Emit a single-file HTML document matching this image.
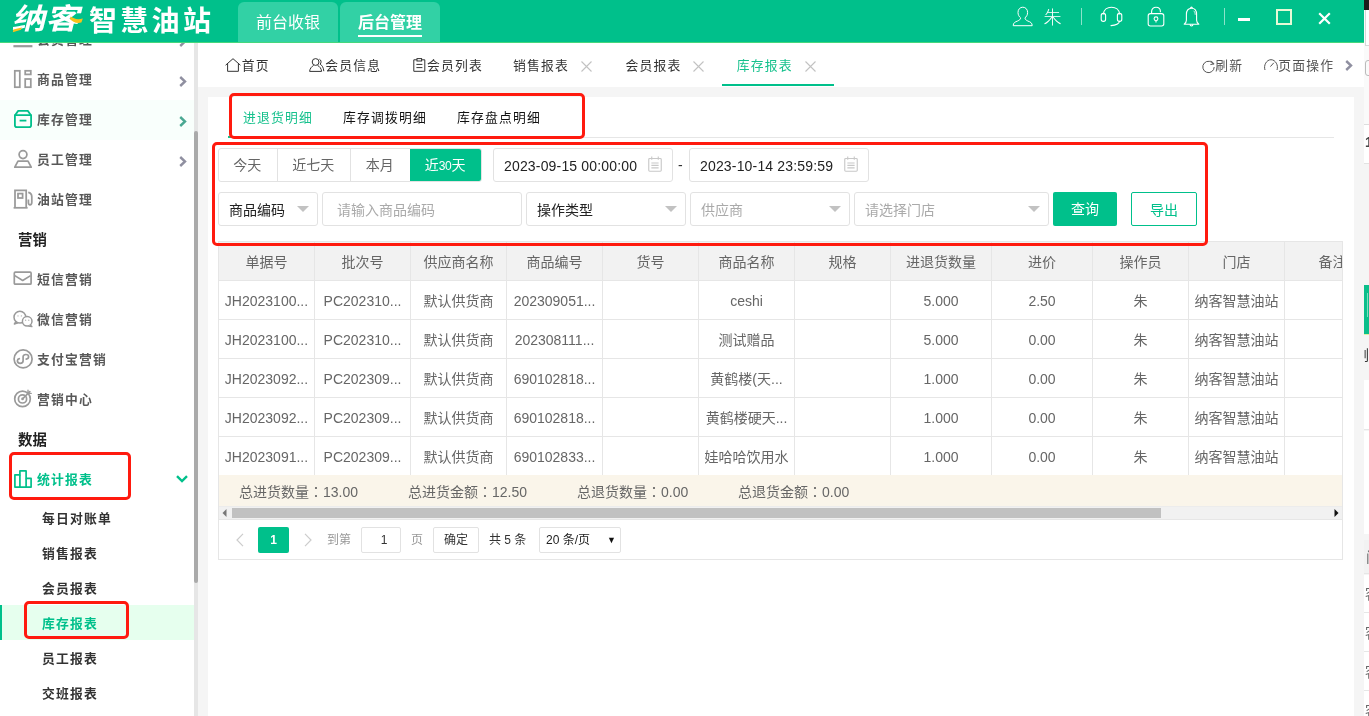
<!DOCTYPE html>
<html lang="zh-CN">
<head>
<meta charset="utf-8">
<title>纳客智慧油站 - 库存报表</title>
<style>
*{box-sizing:border-box;margin:0;padding:0}
html,body{width:1369px;height:716px;overflow:hidden}
#side,#tabs,#panel,#hdr,#rs{will-change:transform}
body{position:relative;background:#f5f5f5;font-family:"Liberation Sans","Noto Sans CJK SC",sans-serif;font-size:14px;color:#333;line-height:1}
.abs{position:absolute}
svg{display:block;overflow:visible}
/* ---------- header ---------- */
#hdr{position:absolute;left:0;top:0;width:1364px;height:42px;background:#00c08b}
#hdrline{position:absolute;left:0;top:42px;width:1364px;height:1px;background:#45d77c}
.logo1{position:absolute;left:14px;top:1px;font-size:29px;line-height:36px;font-weight:700;color:#fff;letter-spacing:0;transform-origin:0 50%;transform:scaleX(1.17) skewX(-12deg);white-space:nowrap}
.logo2{position:absolute;left:89px;top:4px;font-size:28px;line-height:36px;font-weight:700;color:#fff;white-space:nowrap;letter-spacing:3.3px}
.htab{position:absolute;top:2px;height:40px;width:100px;background:#32d1a5;border-radius:6px 6px 0 0;color:#fff;font-size:16px;line-height:42px;text-align:center;white-space:nowrap}
.htab.on{font-weight:700}
.htab.on i{position:absolute;left:18px;top:33px;width:64px;height:2px;background:#fff}
.hname{position:absolute;left:1043.5px;top:5.5px;font-size:18px;line-height:24px;color:#fff;font-weight:300}
.hsep{position:absolute;top:8px;width:1px;height:17px;background:rgba(255,255,255,.55)}
/* ---------- sidebar ---------- */
#side{position:absolute;left:0;top:43px;width:194px;height:673px;background:#fff;overflow:hidden}
#sbar{position:absolute;left:194px;top:43px;width:4px;height:673px;background:#e6e6e6}
#sbar i{position:absolute;left:0;top:88px;width:4px;height:452px;background:#aaa;border-radius:2px}
.mi{position:absolute;left:0;width:194px;height:40px;line-height:40px;font-size:12.8px;letter-spacing:1.2px;font-weight:700;color:#585858;white-space:nowrap}
.mi span{position:absolute;left:37px;top:0}
.mi svg{position:absolute;left:13px;top:9px}
.mi .chev{left:179px;top:16px}
.mh{position:absolute;left:18px;font-size:14.4px;font-weight:700;color:#222;line-height:40px;height:40px;white-space:nowrap}
.si{position:absolute;left:0;width:194px;height:35px;line-height:37px;font-size:12.8px;letter-spacing:1.2px;font-weight:700;color:#333;padding-left:42px;white-space:nowrap}
.si.on{background:#e6ffee;color:#00c08b;border-left:2px solid #00c08b;padding-left:40px}
.red{position:absolute;border:3px solid #ff1a0e;border-radius:5px;pointer-events:none}
/* ---------- tab bar ---------- */
#tabs{position:absolute;left:198px;top:43px;width:1166px;height:44px;background:#fff}
.tt{position:absolute;top:0;height:44px;line-height:46px;font-size:12.8px;letter-spacing:1.2px;color:#333;white-space:nowrap}
.tx{position:absolute;top:18px;width:11px;height:11px}
/* ---------- panel ---------- */
#panel{position:absolute;left:208px;top:97px;width:1146px;height:619px;background:#fff}

/* ---------- panel content ---------- */
.stabs{position:absolute;left:20px;top:0;width:1106px;height:41px;border-bottom:1px solid #e6e6e6}
.stabs b{position:absolute;top:0;height:40px;line-height:42px;font-weight:400;font-size:12.8px;letter-spacing:1.2px;color:#111;white-space:nowrap}
.stabs b.on{color:#16c18d}
.stabs i{position:absolute;left:0;top:39px;width:100px;height:2px;background:#16c18d}
.bg{position:absolute;left:10px;top:51px;height:34px;display:flex;border:1px solid #e2e2e2;border-radius:3px;overflow:hidden;background:#fff}
.bg span{display:block;height:32px;line-height:32px;text-align:center;text-indent:-1.4px;color:#666;font-size:14px;border-left:1px solid #e2e2e2;white-space:nowrap}
.bg span:first-child{border-left:0}
.bg span.on{background:#00c08b;color:#fff;border-left-color:#00c08b}
.inp{position:absolute;height:34px;border:1px solid #e2e2e2;border-radius:3px;background:#fff;line-height:35px;font-size:14px;color:#222;padding-left:10px;white-space:nowrap}
.inp.ph{color:#aaa}
.inp .tri{position:absolute;top:13px;width:0;height:0;border-left:6px solid transparent;border-right:6px solid transparent;border-top:6px solid #c2c2c2}
.inp svg{position:absolute;top:8px}
.btn{position:absolute;top:95px;height:34px;line-height:34px;text-align:center;font-size:14px;border-radius:2px;white-space:nowrap}
/* table */
#tb{position:absolute;left:10px;top:144px;width:1125px;height:319px;border:1px solid #e6e6e6;overflow:hidden;background:#fff}
.tr{position:absolute;left:0;height:39px;display:flex;border-bottom:1px solid #e6e6e6}
.tr div{flex:none;height:38px;line-height:40px;border-right:1px solid #e6e6e6;text-align:center;color:#666;font-size:14px;white-space:nowrap;overflow:hidden}
.tr.h{background:#f2f2f2}
.tot{position:absolute;left:0;top:233px;width:1123px;height:32px;background:#faf5ea;line-height:32px;color:#666;font-size:14px;border-bottom:1px solid #ececec}
.tot span{position:absolute;top:0;white-space:nowrap}
.tot em{font-style:normal;font-family:"Noto Sans CJK JP",sans-serif}
.hs{position:absolute;left:0;top:265px;width:1123px;height:13px;background:#f1f1f1;border-bottom:1px solid #e6e6e6}
.hs i{position:absolute;left:13px;top:1px;width:929px;height:10px;background:#c1c1c1}
.pg{position:absolute;font-size:12px;color:#999;white-space:nowrap}
</style>
</head>
<body>
<!-- HEADER -->
<div id="hdr">
  <div class="logo1">纳客</div>
  <div class="logo2">智慧油站</div>
  <svg class="abs" style="left:12px;top:14px" width="74" height="20" viewBox="0 0 74 20"><path d="M1.4 15.6L9.8 13.4L9 15.8L0.8 18.2Z" fill="#f7c21a"/><path d="M58.6 2.6C62 4.4 64.4 6.2 70.8 4.6L69.4 8.6C63.6 9.8 60.6 7.4 58 5.2Z" fill="#f7c21a"/></svg>
  <div class="htab" style="left:238px">前台收银</div>
  <div class="htab on" style="left:340px">后台管理<i></i></div>
  <div class="hname">朱</div>

  <svg class="abs" style="left:1012px;top:6px" width="21" height="21" viewBox="0 0 21 21" fill="none" stroke="#fff" stroke-width="1" stroke-linejoin="round"><path d="M10.8 1.2C13.6 1.2 15.6 3.4 15.6 6.4C15.6 9 14.4 10.8 13 11.8C13 13.4 14 14.2 15.8 15C18.4 16 20.2 16.8 20.2 19.7H1.2C1.2 16.8 3 16 5.6 15C7.4 14.2 8.6 13.4 8.6 11.8C7.2 10.8 6 9 6 6.4C6 3.4 8 1.2 10.8 1.2Z"/></svg>
  <svg class="abs" style="left:1100px;top:6px" width="23" height="21" viewBox="0 0 23 21" fill="none" stroke="#fff" stroke-width="1.1" stroke-linecap="round"><path d="M3.4 8C3.8 3.8 7.2 1.2 11.5 1.2C15.8 1.2 19.2 3.8 19.6 8"/><rect x="1.2" y="7.4" width="4.4" height="8" rx="2.1"/><rect x="17.4" y="7.4" width="4.4" height="8" rx="2.1"/><path d="M19.6 15.2C19 17.8 16 19.4 11 19.6"/></svg>
  <svg class="abs" style="left:1147px;top:6px" width="18" height="21" viewBox="0 0 18 21" fill="none" stroke="#fff" stroke-width="1.1"><rect x="1.2" y="7.6" width="15.6" height="12.4" rx="2.2"/><path d="M4.6 7.4V5.4C4.6 2.8 6.6 1.2 9 1.2C11.4 1.2 13.4 2.8 13.4 5.4V6.2"/><circle cx="9" cy="12.8" r="1.9"/><path d="M9 14.8V16.6"/></svg>
  <svg class="abs" style="left:1183px;top:6px" width="17" height="22" viewBox="0 0 17 22" fill="none" stroke="#fff" stroke-width="1.1" stroke-linejoin="round"><path d="M8.5 2.2C5.2 2.2 3.4 5 3.4 8.4V14.2C3.4 16 2.4 17.2 1.2 18.2H15.8C14.6 17.2 13.6 16 13.6 14.2V8.4C13.6 5 11.8 2.2 8.5 2.2Z"/><path d="M7.6 2.2C7.6 0.8 9.4 0.8 9.4 2.2"/><path d="M7 18.4C7.2 20.6 9.8 20.6 10 18.4"/><path d="M10.6 4.8C11.8 5.8 12.2 7.4 12.2 8.8" stroke-width=".8"/></svg>
  <div class="abs" style="left:1238px;top:18px;width:12px;height:3px;background:#fff"></div>
  <div class="abs" style="left:1276px;top:9px;width:16px;height:16px;border:2px solid #e6fad6"></div>
  <svg class="abs" style="left:1318px;top:12px" width="13" height="13" viewBox="0 0 13 13" fill="none" stroke="#fff" stroke-width="2.2"><path d="M1.2 1.2L11.8 11.8M11.8 1.2L1.2 11.8"/></svg>
  <div class="hsep" style="left:1081px"></div>
  <div class="hsep" style="left:1224px"></div>
</div>
<div id="hdrline"></div>

<!-- SIDEBAR -->
<div id="side">
  <!-- clipped top item -->
  <div class="mi" style="top:-23px"><svg width="20" height="20" viewBox="0 0 20 20" fill="none" stroke="#9a9a9a" stroke-width="1.75"><rect x="1.5" y="1" width="17" height="9"/><path d="M0.4 17.2H19.4" stroke-width="2.2"/></svg><span>会员管理</span><svg class="chev" width="8" height="11" viewBox="0 0 8 11" fill="none" stroke="#8f8fa0" stroke-width="2.4"><path d="M1.2 1L6 5.5L1.2 10"/></svg></div>
  <div class="mi" style="top:17px"><svg width="20" height="20" viewBox="0 0 20 20" fill="none" stroke="#9a9a9a" stroke-width="1.75"><rect x="1.8" y="1.8" width="5" height="16.4"/><rect x="12.2" y="1.8" width="5.6" height="3.6"/><rect x="12.2" y="10" width="5.6" height="8.2"/></svg><span>商品管理</span><svg class="chev" width="8" height="11" viewBox="0 0 8 11" fill="none" stroke="#8f8fa0" stroke-width="2.4"><path d="M1.2 1L6 5.5L1.2 10"/></svg></div>
  <div class="mi" style="top:57px;background:#f9fffc"><svg width="20" height="20" viewBox="0 0 20 20" fill="none" stroke="#00c08b" stroke-width="1.8" stroke-linejoin="round"><path d="M2 6.2L5.2 1.9H14.8L18 6.2"/><path d="M1.9 6.2H18.1V16.2Q18.1 18.1 16.2 18.1H3.8Q1.9 18.1 1.9 16.2Z"/><path d="M6.6 11.6H13.4"/></svg><span>库存管理</span><svg class="chev" width="8" height="11" viewBox="0 0 8 11" fill="none" stroke="#4aa892" stroke-width="2.4"><path d="M1.2 1L6 5.5L1.2 10"/></svg></div>
  <div class="mi" style="top:97px"><svg width="20" height="20" viewBox="0 0 20 20" fill="none" stroke="#9a9a9a" stroke-width="1.75" stroke-linejoin="round"><circle cx="10" cy="5.6" r="3.9"/><path d="M1.8 18.2L5 12.2H15L18.2 18.2Z"/></svg><span>员工管理</span><svg class="chev" width="8" height="11" viewBox="0 0 8 11" fill="none" stroke="#8f8fa0" stroke-width="2.4"><path d="M1.2 1L6 5.5L1.2 10"/></svg></div>
  <div class="mi" style="top:137px"><svg width="20" height="20" viewBox="0 0 20 20" fill="none" stroke="#9a9a9a" stroke-width="1.75"><path d="M0.6 18.8H14.6"/><path d="M2 18.8V1.4H13.2V18.8"/><rect x="5" y="4.6" width="4.6" height="4.4"/><path d="M15.2 3.4Q18.8 4 18.8 8V13.6Q18.8 15.8 17 15.8Q15.4 15.8 15.4 13.6V10.4"/></svg><span>油站管理</span></div>
  <div class="mh" style="top:177px">营销</div>
  <div class="mi" style="top:217px"><svg width="20" height="20" viewBox="0 0 20 20" fill="none" stroke="#9a9a9a" stroke-width="1.7" stroke-linejoin="round"><rect x="1.3" y="3.2" width="16.8" height="12" rx="1"/><path d="M1.8 6.6L9.7 11.5L17.6 6.6"/></svg><span>短信营销</span></div>
  <div class="mi" style="top:257px"><svg width="20" height="20" viewBox="0 0 20 20" fill="none" stroke="#9a9a9a" stroke-width="1.5" stroke-linejoin="round"><circle cx="6.9" cy="8.2" r="5.9"/><path d="M2.9 12.6L1.4 15L4.8 13.8"/><circle cx="14.2" cy="12.3" r="4.8" fill="#fff"/><path d="M17.2 16L18.8 17.6L15.4 17" fill="#fff"/><g fill="#b5b5b5" stroke="none"><circle cx="5" cy="6.9" r=".7"/><circle cx="8.4" cy="6.9" r=".7"/><circle cx="12.6" cy="11.3" r=".7"/><circle cx="15.8" cy="11.3" r=".7"/></g></svg><span>微信营销</span></div>
  <div class="mi" style="top:297px"><svg width="20" height="20" viewBox="0 0 20 20" fill="none" stroke="#9a9a9a" stroke-width="1.7" stroke-linecap="round"><circle cx="10.1" cy="9.9" r="9"/><path d="M6.3 9.7C4.8 10 4.4 11 4.4 11.8C4.4 13.3 5.6 14.3 7.2 14.3C8.9 14.3 10.1 13.3 10.1 11.8V7.8C10.1 6.4 11.2 5.5 12.8 5.5C14.4 5.5 15.6 6.4 15.6 7.8C15.6 9 14.6 9.9 13.2 10.1"/></svg><span>支付宝营销</span></div>
  <div class="mi" style="top:337px"><svg width="20" height="20" viewBox="0 0 20 20" fill="none" stroke="#9a9a9a" stroke-width="1.7" stroke-linecap="round"><circle cx="9.5" cy="9.9" r="7.8"/><circle cx="9.5" cy="9.9" r="4.1"/><circle cx="9.5" cy="9.9" r="1.3" fill="#9a9a9a" stroke="none"/><path d="M9.8 9.6L16.8 2.6"/><path d="M15 1.2V4.4H18.2" stroke-width="1.4"/></svg><span>营销中心</span></div>
  <div class="mh" style="top:377px">数据</div>
  <div class="mi" style="top:417px;color:#00c08b"><svg width="20" height="20" viewBox="0 0 20 20" fill="none" stroke="#00c08b" stroke-width="1.7" stroke-linejoin="round"><path d="M1.9 18.1V5.8H6.9V1.9H13.1V9.4H18.1V18.1Z"/><path d="M6.9 5.8V18.1M13.1 9.4V18.1"/></svg><span>统计报表</span><svg class="chev" style="left:176px;top:15px" width="12" height="8" viewBox="0 0 12 8" fill="none" stroke="#00c08b" stroke-width="2.4"><path d="M1 1.2L6 6L11 1.2"/></svg></div>
  <div class="si" style="top:457px">每日对账单</div>
  <div class="si" style="top:492px">销售报表</div>
  <div class="si" style="top:527px">会员报表</div>
  <div class="si on" style="top:562px">库存报表</div>
  <div class="si" style="top:597px">员工报表</div>
  <div class="si" style="top:632px">交班报表</div>
  <div class="red" style="left:9px;top:409px;width:122px;height:48px"></div>
  <div class="red" style="left:23.5px;top:558px;width:105px;height:38px"></div>
</div>
<div id="sbar"><i></i></div>

<!-- TAB BAR -->
<div id="tabs">
  <svg class="abs" style="left:27px;top:15px" width="16" height="14" viewBox="0 0 16 14" fill="none" stroke="#333" stroke-width="1"><path d="M0.6 7.2L8 0.7L15.4 7.2"/><path d="M2.6 5.6V13.3H13.4V5.6"/></svg>
  <div class="tt" style="left:43.7px">首页</div>
  <svg class="abs" style="left:111px;top:15px" width="16" height="14" viewBox="0 0 16 14" fill="none" stroke="#333" stroke-width="1"><circle cx="6.6" cy="4" r="3.4"/><path d="M0.6 13.4C0.8 10.4 3 8.4 4.6 7.4M8.6 7.4C10.4 8.4 12.4 10.4 12.6 13.4H0.6"/><path d="M10.4 1.2C12.2 1.8 12.6 4.6 11.2 6.2C13 7.2 14.6 9.6 14.8 13.2"/></svg>
  <div class="tt" style="left:127.2px">会员信息</div>
  <svg class="abs" style="left:215px;top:15px" width="13" height="14" viewBox="0 0 13 14" fill="none" stroke="#333" stroke-width="1"><path d="M4 1.8H0.8V13.3H11.8V1.8H8.6"/><rect x="4" y="0.6" width="4.6" height="2.4"/><path d="M3.4 6.4H9.4M3.4 9.6H9.4"/></svg>
  <div class="tt" style="left:229.1px">会员列表</div>
  <div class="tt" style="left:315.1px">销售报表</div><svg class="tx" style="left:383px" viewBox="0 0 11 11" fill="none" stroke="#c2c2c2" stroke-width="1.1"><path d="M0.5 0.5L10.5 10.5M10.5 0.5L0.5 10.5"/></svg>
  <div class="tt" style="left:427.4px">会员报表</div><svg class="tx" style="left:494.7px" viewBox="0 0 11 11" fill="none" stroke="#c2c2c2" stroke-width="1.1"><path d="M0.5 0.5L10.5 10.5M10.5 0.5L0.5 10.5"/></svg>
  <div class="tt" style="left:538.7px;color:#16c18d">库存报表</div><svg class="tx" style="left:607px" viewBox="0 0 11 11" fill="none" stroke="#c2c2c2" stroke-width="1.1"><path d="M0.5 0.5L10.5 10.5M10.5 0.5L0.5 10.5"/></svg>
  <div class="abs" style="left:524px;top:41px;width:112px;height:2px;background:#00c08b"></div>
  <svg class="abs" style="left:1003.5px;top:16.5px" width="13" height="13" viewBox="0 0 13 13" fill="none" stroke="#555" stroke-width="1"><path d="M11.6 4.4A5.7 5.7 0 1 0 12.2 7"/><path d="M9 0.8L12 3.8L8.4 4.6" stroke-linejoin="round"/></svg>
  <div class="tt" style="left:1017.2px;color:#555">刷新</div>
  <svg class="abs" style="left:1066px;top:16px" width="14" height="12" viewBox="0 0 14 12" fill="none" stroke="#555" stroke-width="1"><path d="M1 11C-0.6 6.5 2.4 0.7 7 0.7C11.6 0.7 14.6 6.5 13 11"/><path d="M6.4 7.6L9.8 3.8"/></svg>
  <div class="tt" style="left:1080.3px;color:#555">页面操作</div>
  <svg class="abs" style="left:1147px;top:17px" width="8" height="11" viewBox="0 0 8 11" fill="none" stroke="#8f8fa0" stroke-width="2.4"><path d="M1.2 1L6 5.5L1.2 10"/></svg>
</div>

<!-- PANEL -->
<div id="panel">
  <div class="stabs"><b class="on" style="left:15px">进退货明细</b><b style="left:115px">库存调拨明细</b><b style="left:229px">库存盘点明细</b><i></i></div>
  <div class="bg"><span style="width:58px">今天</span><span style="width:73px">近七天</span><span style="width:60px">本月</span><span class="on" style="width:71px;text-indent:-2px">近<small style="font-size:12px;letter-spacing:-.3px">30</small>天</span></div>
  <div class="inp" style="left:285px;top:51px;width:180px;letter-spacing:.17px;line-height:34px">2023-09-15 00:00:00<svg style="left:154.3px;top:7.4px" width="14" height="16" viewBox="0 0 15 17" fill="none" stroke="#c8c8c8" stroke-width="1.2"><rect x="0.8" y="2.6" width="13.4" height="13.6" rx="1"/><path d="M4 0.4V4M11 0.4V4M3.6 7.4H11.4M3.6 10H11.4M3.6 12.6H11.4"/></svg></div>
  <div class="abs" style="left:470px;top:51px;line-height:34px;color:#333">-</div>
  <div class="inp" style="left:481px;top:51px;width:180px;letter-spacing:.17px;line-height:34px">2023-10-14 23:59:59<svg style="left:154.3px;top:7.4px" width="14" height="16" viewBox="0 0 15 17" fill="none" stroke="#c8c8c8" stroke-width="1.2"><rect x="0.8" y="2.6" width="13.4" height="13.6" rx="1"/><path d="M4 0.4V4M11 0.4V4M3.6 7.4H11.4M3.6 10H11.4M3.6 12.6H11.4"/></svg></div>
  <div class="inp" style="left:10px;top:95px;width:100px">商品编码<i class="tri" style="left:78px"></i></div>
  <div class="inp ph" style="left:114px;top:95px;width:200px;padding-left:14px">请输入商品编码</div>
  <div class="inp" style="left:318px;top:95px;width:160px">操作类型<i class="tri" style="left:138px"></i></div>
  <div class="inp ph" style="left:482px;top:95px;width:160px">供应商<i class="tri" style="left:138px"></i></div>
  <div class="inp ph" style="left:646px;top:95px;width:195px">请选择门店<i class="tri" style="left:173px"></i></div>
  <div class="btn" style="left:845px;width:64px;background:#00c08b;color:#fff">查询</div>
  <div class="btn" style="left:923px;width:66px;border:1px solid #00c08b;color:#00c08b;line-height:35px">导出</div>
  <div id="tb">
<div class="tr h" style="top:0px"><div style="width:96px">单据号</div><div style="width:96px">批次号</div><div style="width:96px">供应商名称</div><div style="width:96px">商品编号</div><div style="width:96px">货号</div><div style="width:96px">商品名称</div><div style="width:96px">规格</div><div style="width:101px">进退货数量</div><div style="width:101px">进价</div><div style="width:96px">操作员</div><div style="width:96px">门店</div><div style="width:96px">备注</div></div>
<div class="tr" style="top:39px"><div style="width:96px">JH2023100...</div><div style="width:96px">PC202310...</div><div style="width:96px">默认供货商</div><div style="width:96px">202309051...</div><div style="width:96px"></div><div style="width:96px">ceshi</div><div style="width:96px"></div><div style="width:101px">5.000</div><div style="width:101px">2.50</div><div style="width:96px">朱</div><div style="width:96px">纳客智慧油站</div><div style="width:96px"></div></div>
<div class="tr" style="top:78px"><div style="width:96px">JH2023100...</div><div style="width:96px">PC202310...</div><div style="width:96px">默认供货商</div><div style="width:96px">202308111...</div><div style="width:96px"></div><div style="width:96px">测试赠品</div><div style="width:96px"></div><div style="width:101px">5.000</div><div style="width:101px">0.00</div><div style="width:96px">朱</div><div style="width:96px">纳客智慧油站</div><div style="width:96px"></div></div>
<div class="tr" style="top:117px"><div style="width:96px">JH2023092...</div><div style="width:96px">PC202309...</div><div style="width:96px">默认供货商</div><div style="width:96px">690102818...</div><div style="width:96px"></div><div style="width:96px">黄鹤楼(天...</div><div style="width:96px"></div><div style="width:101px">1.000</div><div style="width:101px">0.00</div><div style="width:96px">朱</div><div style="width:96px">纳客智慧油站</div><div style="width:96px"></div></div>
<div class="tr" style="top:156px"><div style="width:96px">JH2023092...</div><div style="width:96px">PC202309...</div><div style="width:96px">默认供货商</div><div style="width:96px">690102818...</div><div style="width:96px"></div><div style="width:96px">黄鹤楼硬天...</div><div style="width:96px"></div><div style="width:101px">1.000</div><div style="width:101px">0.00</div><div style="width:96px">朱</div><div style="width:96px">纳客智慧油站</div><div style="width:96px"></div></div>
<div class="tr" style="top:195px"><div style="width:96px">JH2023091...</div><div style="width:96px">PC202309...</div><div style="width:96px">默认供货商</div><div style="width:96px">690102833...</div><div style="width:96px"></div><div style="width:96px">娃哈哈饮用水</div><div style="width:96px"></div><div style="width:101px">1.000</div><div style="width:101px">0.00</div><div style="width:96px">朱</div><div style="width:96px">纳客智慧油站</div><div style="width:96px"></div></div>
    <div class="tot"><span style="left:20px">总进货数量<em lang="ja">：</em>13.00</span><span style="left:189px">总进货金额<em lang="ja">：</em>12.50</span><span style="left:358px">总退货数量<em lang="ja">：</em>0.00</span><span style="left:519px">总退货金额<em lang="ja">：</em>0.00</span></div>
    <div class="hs"><i></i>
      <svg class="abs" style="left:3px;top:2px" width="5" height="8" viewBox="0 0 5 8"><path d="M4.5 0L0.5 4L4.5 8Z" fill="#777"/></svg>
      <svg class="abs" style="left:1115px;top:2px" width="5" height="8" viewBox="0 0 5 8"><path d="M0.5 0L4.5 4L0.5 8Z" fill="#111"/></svg>
    </div>
    <svg class="abs" style="left:17px;top:291px" width="8" height="14" viewBox="0 0 8 14" fill="none" stroke="#ccc" stroke-width="1.2"><path d="M7 0.8L1 7L7 13.2"/></svg>
    <div class="abs" style="left:39px;top:285px;width:31px;height:26px;background:#00c08b;color:#fff;border-radius:2px;text-align:center;line-height:26px;font-size:12px;font-weight:700">1</div>
    <svg class="abs" style="left:85px;top:291px" width="8" height="14" viewBox="0 0 8 14" fill="none" stroke="#ccc" stroke-width="1.2"><path d="M1 0.8L7 7L1 13.2"/></svg>
    <div class="pg" style="left:108px;top:285px;line-height:26px">到第</div>
    <div class="abs" style="left:142px;top:285px;width:40px;height:26px;border:1px solid #e2e2e2;border-radius:2px;text-align:center;line-height:24px;font-size:12px;color:#333;padding-left:6px">1</div>
    <div class="pg" style="left:192px;top:285px;line-height:26px">页</div>
    <div class="abs" style="left:214px;top:285px;width:46px;height:26px;border:1px solid #e2e2e2;border-radius:2px;text-align:center;line-height:25px;font-size:12px;color:#333">确定</div>
    <div class="pg" style="left:270px;top:285px;line-height:26px;color:#333">共 5 条</div>
    <div class="abs" style="left:320px;top:285px;width:82px;height:26px;border:1px solid #e2e2e2;border-radius:2px;line-height:24px;font-size:12px;color:#222;padding-left:6px;white-space:nowrap">20 条/页<span style="position:absolute;left:67px;top:0;font-size:9px;color:#111">▼</span></div>
  </div>
  <div class="red" style="left:21px;top:-4px;width:356px;height:46px"></div>
  <div class="red" style="left:3.5px;top:45px;width:996px;height:104px"></div>
</div>

<!-- RIGHT EDGE STRIP (neighbouring window fragment) -->
<div id="rs" class="abs" style="left:1364px;top:0;width:5px;height:716px;background:#fafafa;overflow:hidden;font-size:14px;color:#555">
  <div class="abs" style="left:0;top:0;width:5px;height:10px;background:#1c1c1c"></div>
  <div class="abs" style="left:1px;top:10px;width:4px;height:36px;border:1px solid #d8d8d8;border-width:0 0 1px 1px;background:#fff"></div>
  <div class="abs" style="left:1px;top:60px;width:8px;height:16px;border:1.5px solid #bbb;border-radius:3px"></div>
  <div class="abs" style="left:0;top:124px;width:5px;height:40px;background:#fff;border-top:1px solid #ddd;border-bottom:1px solid #e2e2e2;line-height:34px;font-weight:700;color:#444"><span style="position:absolute;left:1px">1</span></div>
  <div class="abs" style="left:0;top:164px;width:5px;height:552px;background:#f5f5f5"></div>
  <div class="abs" style="left:0;top:285px;width:5px;height:50px;background:#0bbf8b;border-bottom:1px solid #dff0a0"><i style="position:absolute;left:3px;top:8px;width:1px;height:24px;background:#7fe0c0"></i></div>
  <div class="abs" style="left:0;top:340px;width:5px;height:30px;line-height:30px;color:#333"><span style="position:absolute;left:-9px">剩</span></div>
  <div class="abs" style="left:0;top:380px;width:5px;height:50px;background:#fff;border-bottom:1px solid #e6e6e6"></div>
  <div class="abs" style="left:0;top:431px;width:5px;height:103px;background:#fff"></div>
  <div class="abs" style="left:0;top:540px;width:5px;height:34px;background:#f2f2f2;border-bottom:1px solid #e6e6e6;line-height:34px;color:#666"><span style="position:absolute;left:2px">门</span></div>
  <div class="abs" style="left:0;top:575px;width:5px;height:141px;background:#fff;color:#666">
    <span style="position:absolute;left:1px;top:12px">客</span><i style="position:absolute;left:0;top:37px;width:5px;height:1px;background:#e6e6e6"></i>
    <span style="position:absolute;left:1px;top:51px">客</span><i style="position:absolute;left:0;top:76px;width:5px;height:1px;background:#e6e6e6"></i>
    <span style="position:absolute;left:1px;top:90px">客</span><i style="position:absolute;left:0;top:115px;width:5px;height:1px;background:#e6e6e6"></i>
    <span style="position:absolute;left:1px;top:129px">客</span>
  </div>
</div>

</body>
</html>
